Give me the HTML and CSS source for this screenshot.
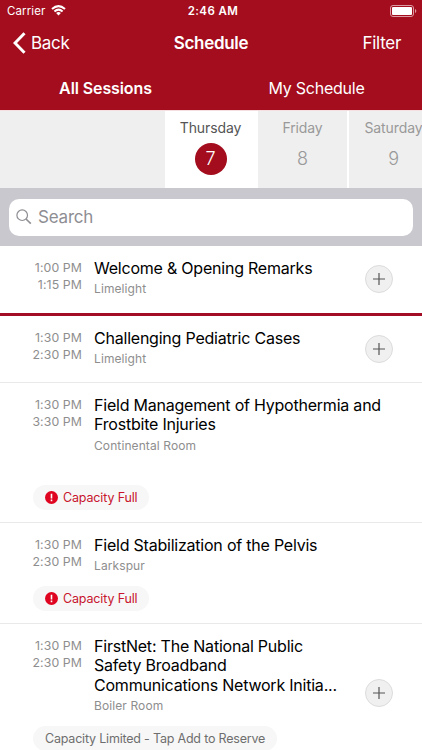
FILE: index.html
```
<!DOCTYPE html>
<html lang="en">
<head>
    <meta charset="utf-8" />
    <title>Schedule</title>
    <link rel="stylesheet" href="styles.css">
</head>
<body>
    <header class="header">
        <div class="status">
            <div class="carrier">
                <span>Carrier</span>
                <svg width="15" height="11" viewBox="0 0 15 11" fill="none" stroke="#fff" stroke-width="2">
                    <path d="M1 4Q7.5-1.8 14 4" />
                    <path d="M3.4 6.4Q7.5 2.8 11.6 6.4" />
                    <path d="M5.1 7.9Q7.5 5.9 9.9 7.9L7.5 10.4Z" fill="#fff" stroke="none" />
                </svg>
            </div>
            <b class="clock">2:46 AM</b>
            <svg class="battery" width="27" height="12" viewBox="0 0 27 12">
                <rect x=".5" y=".5" width="23" height="11" rx="2.5" fill="none" stroke="#dc9ba3" />
                <rect x="2" y="2" width="20" height="8" rx="1" fill="#fff" />
                <path d="M25 4q1.3.5 1.3 2T25 8z" fill="#dc9ba3" />
            </svg>
        </div>
        <div class="nav">
            <a class="back">
                <svg width="13" height="22" viewBox="0 0 13 22" fill="none" stroke="#fff" stroke-width="3">
                    <path d="M11.5 1.2L2 11l9.500 9.800" />
                </svg>
                <span>Back</span>
            </a>
            <h1>Schedule</h1>
            <a class="filter">Filter</a>
        </div>
        <div class="tabs">
            <a class="tab active">All Sessions</a>
            <a class="tab">My Schedule</a>
        </div>
    </header>

    <div class="days">
        <div class="day empty"></div>
        <div class="day selected"><span>Thursday</span><i>7</i></div>
        <div class="day"><span>Friday</span><i>8</i></div>
        <div class="day"><span>Saturday</span><i>9</i></div>
    </div>

    <div class="search">
        <div class="field">
            <svg width="16" height="16" viewBox="0 0 16 16" fill="none" stroke="#8e8e93">
                <circle cx="6.200" cy="6.200" r="5.300" stroke-width="1.200" />
                <path d="M10 10l4.800 4.600" stroke-width="1.600" />
            </svg>
            <span>Search</span>
        </div>
    </div>

    <ul class="sessions">
        <li class="session now">
            <div class="time">1:00 PM<br>1:15 PM</div>
            <div class="info">
                <h2>Welcome &amp; Opening Remarks</h2>
                <p>Limelight</p>
            </div>
            <div class="add"><svg width="12" height="12" viewBox="0 0 12 12"><path d="M6 0v12M0 6h12" /></svg></div>
        </li>
        <li class="session">
            <div class="time">1:30 PM<br>2:30 PM</div>
            <div class="info">
                <h2>Challenging Pediatric Cases</h2>
                <p>Limelight</p>
            </div>
            <div class="add"><svg width="12" height="12" viewBox="0 0 12 12"><path d="M6 0v12M0 6h12" /></svg></div>
        </li>
        <li class="session tall">
            <div class="time">1:30 PM<br>3:30 PM</div>
            <div class="info">
                <h2>Field Management of Hypothermia and<br>Frostbite Injuries</h2>
                <p>Continental Room</p>
            </div>
            <div class="badge full">
                <svg width="13" height="13" viewBox="0 0 13 13"><circle cx="6.500" cy="6.500" r="6.500" fill="#df0420" /><path d="M6.500 2.800v4.600M6.500 8.600v1.700" stroke="#fff" stroke-width="1.600" /></svg>
                <span>Capacity Full</span>
            </div>
        </li>
        <li class="session medium">
            <div class="time">1:30 PM<br>2:30 PM</div>
            <div class="info">
                <h2>Field Stabilization of the Pelvis</h2>
                <p>Larkspur</p>
            </div>
            <div class="badge full">
                <svg width="13" height="13" viewBox="0 0 13 13"><circle cx="6.500" cy="6.500" r="6.500" fill="#df0420" /><path d="M6.500 2.800v4.600M6.500 8.600v1.700" stroke="#fff" stroke-width="1.600" /></svg>
                <span>Capacity Full</span>
            </div>
        </li>
        <li class="session last">
            <div class="time">1:30 PM<br>2:30 PM</div>
            <div class="info">
                <h2>FirstNet: The National Public<br>Safety Broadband<br>Communications Network Initia...</h2>
                <p>Boiler Room</p>
            </div>
            <div class="add"><svg width="12" height="12" viewBox="0 0 12 12"><path d="M6 0v12M0 6h12" /></svg></div>
            <div class="badge limited">Capacity Limited - Tap Add to Reserve</div>
        </li>
    </ul>
</body>
</html>
```
FILE: styles.css
```
* {
    margin: 0;
    padding: 0;
    box-sizing: border-box;
}

body {
    height: 750px;
    overflow: hidden;
    background: #fff;
    font-family: Inter, "Liberation Sans", sans-serif;
}

svg {
    display: block;
    flex: none;
}

/* header */
.header {
    height: 110px;
    background: #a30d1d;
    color: #fff;
}

.status {
    display: grid;
    grid-template-columns: 1fr auto 1fr;
    align-items: center;
    height: 21px;
    padding: 0 5px 0 7px;
    font-size: 11.5px;
}

.carrier {
    display: flex;
    align-items: center;
    gap: 6px;
    letter-spacing: .1px;
}

.clock {
    padding-left: 2px;
    font-size: 11.5px;
    font-weight: 600;
    letter-spacing: .4px;
}

.battery {
    justify-self: end;
}

.nav {
    display: grid;
    grid-template-columns: 1fr auto 1fr;
    align-items: center;
    height: 44px;
    padding: 0 21px 0 13px;
    font-size: 17px;
    letter-spacing: -.3px;
}

.back {
    display: flex;
    align-items: center;
    gap: 5px;
}

.nav h1 {
    padding-left: 8px;
    font-size: 17px;
    font-weight: 600;
}

.filter {
    justify-self: end;
}

.tabs {
    display: grid;
    grid-template-columns: 1fr 1fr;
    height: 45px;
    line-height: 47px;
    text-align: center;
    font-size: 16px;
    letter-spacing: -.25px;
}

.tab.active {
    font-weight: 600;
    letter-spacing: -.1px;
}

/* day strip */
.days {
    display: flex;
    height: 78px;
    overflow: hidden;
    border-top: 1px solid #f4dfe1;
}

.day {
    flex: none;
    width: 91px;
    padding-top: 8px;
    border-right: 2px solid #fff;
    background: #efefef;
    color: #999;
    text-align: center;
    font-size: 14px;
    line-height: 17px;
    letter-spacing: -.1px;
}

.day.empty {
    width: 165px;
    border: 0;
}

.day span {
    display: block;
}

.day i {
    display: block;
    width: 32px;
    height: 32px;
    margin: 7px auto 0;
    border-radius: 50%;
    font-style: normal;
    font-weight: 300;
    font-size: 18px;
    line-height: 32px;
}

.day.selected {
    width: 93px;
    background: #fff;
    color: #555;
}

.selected i {
    background: #a30d1d;
    color: #fff;
}

/* search */
.search {
    height: 58px;
    padding: 11px 9px 10px;
    background: #c9c8ce;
}

.field {
    display: flex;
    align-items: center;
    gap: 6px;
    height: 37px;
    padding: 0 7px 2px;
    border-radius: 10px;
    background: #fff;
    color: #8e8e93;
    font-size: 17px;
    letter-spacing: -.2px;
}

/* sessions */
.sessions {
    list-style: none;
}

.session {
    display: grid;
    grid-template-columns: 82px 1fr 28px;
    grid-template-rows: 1fr auto;
    column-gap: 12px;
    height: 67px;
    padding: 12px 29px 0 0;
    border-bottom: 1px solid #e9e9eb;
}

.session.now {
    height: 70px;
    border-bottom: 3px solid #a30d25;
}

.session.tall {
    height: 140px;
}

.session.medium {
    height: 101px;
}

.session.last {
    height: 138px;
    border: 0;
}

.time {
    padding-top: 2px;
    color: #8e8e8e;
    text-align: right;
    font-size: 12.3px;
    line-height: 16.5px;
    letter-spacing: .1px;
}

.info {
    padding-top: 1px;
    white-space: nowrap;
}

.info h2 {
    color: #000;
    font-size: 16px;
    font-weight: 400;
    line-height: 19.3px;
    letter-spacing: -.22px;
}

.info p {
    margin-top: 3px;
    color: #8e8e8e;
    font-size: 12px;
    line-height: 16px;
    letter-spacing: .1px;
}

.add {
    display: flex;
    align-items: center;
    justify-content: center;
    width: 28px;
    height: 28px;
    margin-top: 7px;
    border: 1px solid #dcdcdc;
    border-radius: 50%;
    background: #f0f0f0;
}

.last .add {
    margin-top: 43px;
}

.add path {
    stroke: #555;
    stroke-width: 1.200;
}

.badge {
    grid-column: 1 / -1;
    justify-self: start;
    display: flex;
    align-items: center;
    gap: 5px;
    height: 25px;
    margin: 0 0 12px 33px;
    padding: 0 12px;
    border-radius: 13px;
    background: #f7f7f7;
    color: #c8152d;
    font-size: 12.5px;
    letter-spacing: -.15px;
}

.badge.limited {
    margin-bottom: 11px;
    color: #6e6e6e;
    letter-spacing: -.2px;
}
```
